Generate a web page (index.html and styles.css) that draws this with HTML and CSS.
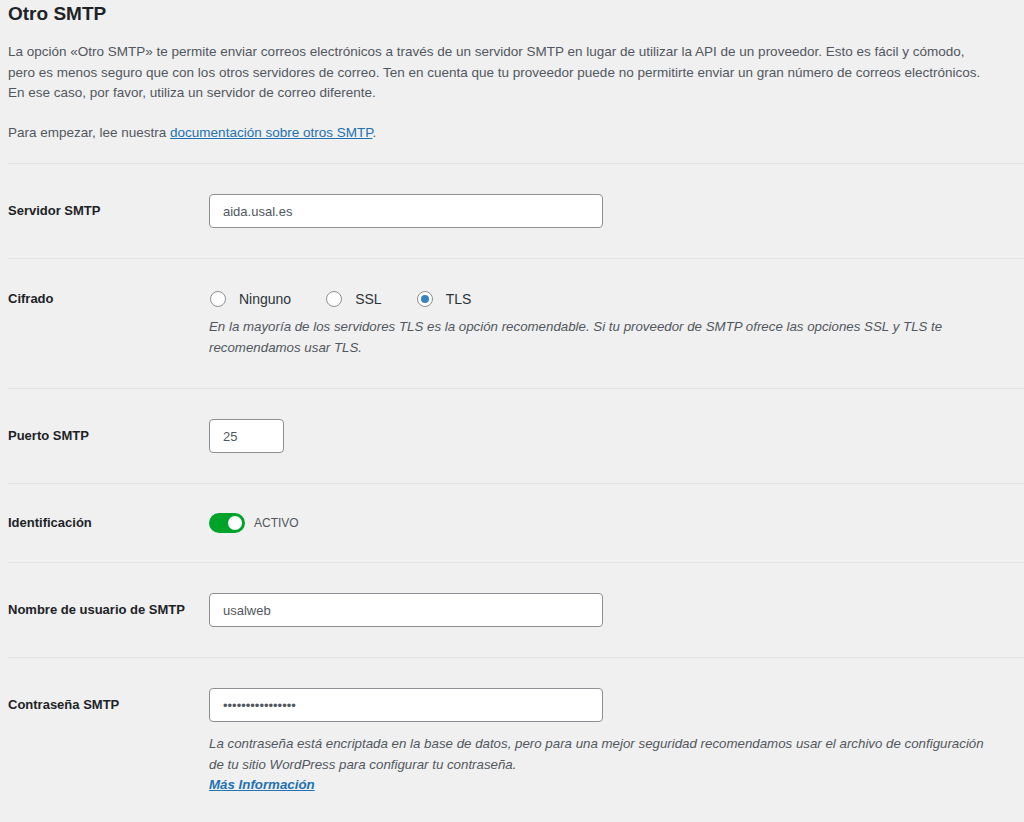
FILE: index.html
```html
<!DOCTYPE html>
<html lang="es">
<head>
    <meta charset="UTF-8">
    <meta name="viewport" content="width=device-width, initial-scale=1.0">
    <title>Otro SMTP</title>
    <link rel="stylesheet" href="styles.css">
</head>
<body>
    <div class="wrap">
        <h2 class="section-title">Otro SMTP</h2>
        <p class="section-desc">La opción «Otro SMTP» te permite enviar correos electrónicos a través de un servidor SMTP en lugar de utilizar la API de un proveedor. Esto es fácil y cómodo,<br>pero es menos seguro que con los otros servidores de correo. Ten en cuenta que tu proveedor puede no permitirte enviar un gran número de correos electrónicos.<br>En ese caso, por favor, utiliza un servidor de correo diferente.</p>
        <p class="section-desc">Para empezar, lee nuestra <a href="#">documentación sobre otros SMTP</a>.</p>

        <div class="field-row">
            <div class="field-label field-label-input"><label for="smtpHost">Servidor SMTP</label></div>
            <div class="field-body">
                <input type="text" id="smtpHost" class="text-input" value="aida.usal.es">
            </div>
        </div>

        <div class="field-row">
            <div class="field-label"><label>Cifrado</label></div>
            <div class="field-body">
                <div class="radio-group">
                    <label class="radio"><span class="radio-dot"></span>Ninguno</label>
                    <label class="radio"><span class="radio-dot"></span>SSL</label>
                    <label class="radio"><span class="radio-dot checked"></span>TLS</label>
                </div>
                <p class="field-desc">En la mayoría de los servidores TLS es la opción recomendable. Si tu proveedor de SMTP ofrece las opciones SSL y TLS te<br>recomendamos usar TLS.</p>
            </div>
        </div>

        <div class="field-row">
            <div class="field-label field-label-input"><label for="smtpPort">Puerto SMTP</label></div>
            <div class="field-body">
                <input type="text" id="smtpPort" class="text-input small" value="25">
            </div>
        </div>

        <div class="field-row">
            <div class="field-label field-label-toggle"><label>Identificación</label></div>
            <div class="field-body">
                <div class="toggle-wrap">
                    <span class="toggle"><span class="toggle-knob"></span></span>
                    <span class="toggle-text">ACTIVO</span>
                </div>
            </div>
        </div>

        <div class="field-row">
            <div class="field-label field-label-input"><label for="smtpUser">Nombre de usuario de SMTP</label></div>
            <div class="field-body">
                <input type="text" id="smtpUser" class="text-input" value="usalweb">
            </div>
        </div>

        <div class="field-row">
            <div class="field-label field-label-input"><label for="smtpPass">Contraseña SMTP</label></div>
            <div class="field-body">
                <input type="password" id="smtpPass" class="text-input" value="aaaaaaaaaaaaaaaa">
                <p class="field-desc pass-desc">La contraseña está encriptada en la base de datos, pero para una mejor seguridad recomendamos usar el archivo de configuración<br>de tu sitio WordPress para configurar tu contraseña.<br><a href="#" class="more-link">Más Información</a></p>
            </div>
        </div>
    </div>
</body>
</html>
```

FILE: styles.css
```css
body {
    font-family: "Liberation Sans", Arial, sans-serif;
    background-color: #f0f0f0;
    color: #3c434a;
    margin: 0;
    padding: 0;
    font-size: 13px;
}
.wrap {
    padding-left: 8px;
}
.section-title {
    margin: 0;
    padding-top: 1px;
    font-size: 19px;
    line-height: 26px;
    font-weight: 700;
    color: #1d2327;
}
.section-desc {
    margin: 15px 0 0;
    font-size: 13.5px;
    line-height: 20.5px;
    color: #50575e;
}
.section-desc + .section-desc {
    margin-top: 19px;
}
.section-desc a {
    color: #2271b1;
}
.field-row {
    display: flex;
    align-items: flex-start;
    border-top: 1px solid #e4e4e4;
    padding: 30px 0;
}
.wrap > .section-desc:last-of-type {
    margin-bottom: 20px;
}
.field-label {
    width: 201px;
    flex-shrink: 0;
    line-height: 20px;
    font-weight: 700;
    color: #1d2327;
}
.field-label-input {
    line-height: 34px;
}
.field-label-toggle {
    line-height: 18px;
}
.field-body {
    flex: 1;
}
.text-input {
    display: block;
    width: 394px;
    height: 34px;
    box-sizing: border-box;
    padding: 0 13px;
    border: 1px solid #8c8f94;
    border-radius: 4px;
    background-color: #fff;
    font-family: inherit;
    font-size: 13px;
    color: #50575e;
}
.text-input.small {
    width: 75px;
}
.radio-group {
    display: flex;
    align-items: center;
    height: 20px;
}
.radio {
    display: flex;
    align-items: center;
    margin-right: 34px;
    font-size: 14px;
    color: #2c3338;
}
.radio-dot {
    width: 16px;
    height: 16px;
    box-sizing: border-box;
    border: 1px solid #8c8f94;
    border-radius: 50%;
    background-color: #fff;
    margin: 0 13px 0 1px;
    position: relative;
}
.radio-dot.checked::after {
    content: "";
    position: absolute;
    top: 3px;
    left: 3px;
    width: 8px;
    height: 8px;
    border-radius: 50%;
    background-color: #3582c4;
}
.field-desc {
    margin: 8px 0 0;
    font-style: italic;
    font-size: 13.3px;
    line-height: 20.5px;
    color: #50575e;
}
.pass-desc {
    margin-top: 12px;
}
.more-link {
    color: #2271b1;
    font-weight: 700;
}
.toggle-wrap {
    display: flex;
    align-items: center;
    height: 18px;
}
.toggle {
    width: 36px;
    height: 20px;
    border-radius: 10px;
    background-color: #00a32a;
    position: relative;
    margin-right: 9px;
}
.toggle-knob {
    position: absolute;
    top: 3px;
    right: 3px;
    width: 14px;
    height: 14px;
    border-radius: 50%;
    background-color: #fff;
}
.toggle-text {
    font-size: 12px;
    color: #50575e;
}
```
